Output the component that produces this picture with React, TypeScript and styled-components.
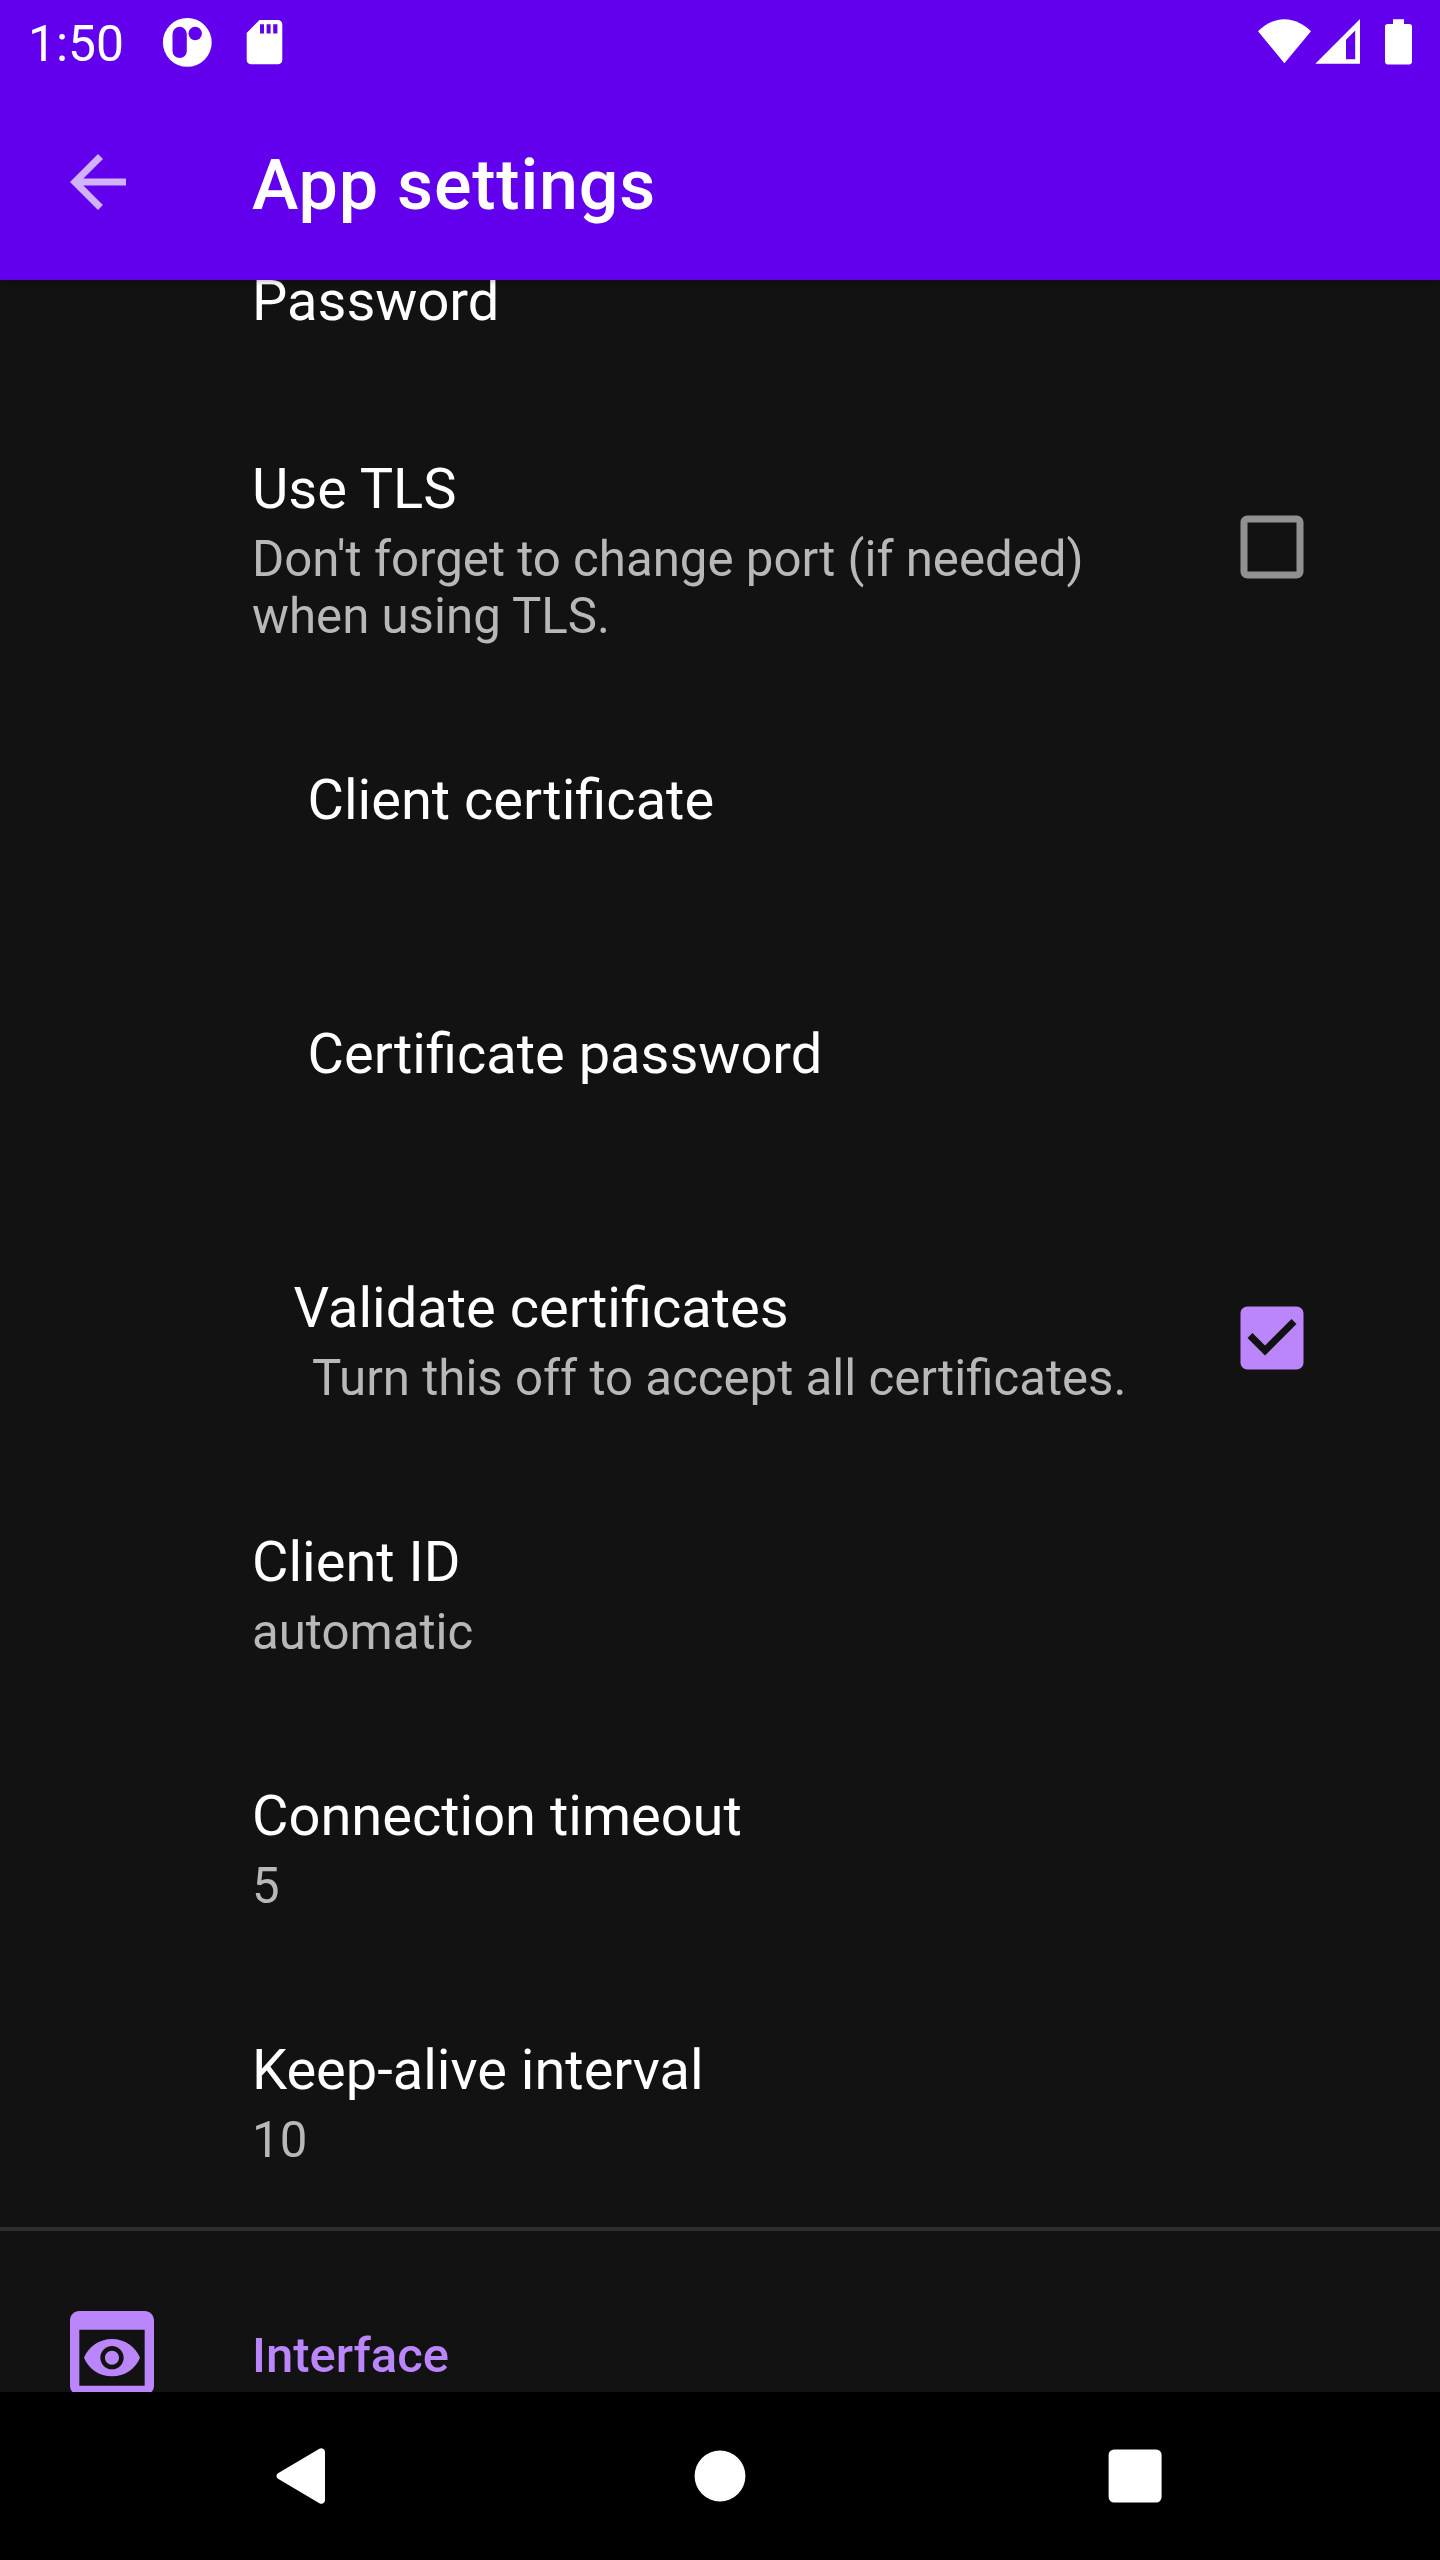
import React from "react";
import styled, { createGlobalStyle } from "styled-components";

const GlobalStyle = createGlobalStyle`
  * { box-sizing: border-box; }
  body { margin: 0; background: #121212; }
`;

const Screen = styled.div`
  display: flex;
  flex-direction: column;
  width: 1440px;
  height: 2560px;
  overflow: hidden;
  background: #121212;
  color: #fff;
  font-family: Roboto, "Liberation Sans", sans-serif;
`;

const Header = styled.header`
  position: relative;
  z-index: 1;
  flex: none;
  background: #6200ee;
  box-shadow: 0 1px 6px rgba(0, 0, 0, 0.3);
`;

const StatusBar = styled.div`
  display: flex;
  height: 84px;
  padding: 0 24px 0 28px;
  align-items: center;
  justify-content: space-between;
`;

const StatusGroup = styled.div`
  display: flex;
  align-items: center;
  height: 84px;
`;

const Clock = styled.span`
  width: 132px;
  padding-top: 4px;
  font-size: 49.8px;
  line-height: 58px;
`;

const Toolbar = styled.div`
  display: flex;
  align-items: center;
  height: 196px;
  padding-left: 56px;
`;

const BackButton = styled.button`
  display: flex;
  width: 196px;
  padding: 0;
  border: 0;
  background: none;
  color: rgba(255, 255, 255, 0.7);
`;

const PageTitle = styled.h1`
  margin: 0;
  padding-top: 5px;
  font-size: 70px;
  font-weight: 500;
  line-height: 82px;
  letter-spacing: 0.8px;
`;

const Content = styled.main`
  flex: 1;
  min-height: 0;
  overflow: hidden;
`;

const List = styled.div`
  margin-top: -76px;
`;

const Row = styled.div`
  display: flex;
  align-items: center;
  padding: 0 126px 0 252px;
`;

const RowText = styled.div`
  flex: 1;
  padding: 64px 0 58px;
`;

const RowTitle = styled.div<{ $indent?: number }>`
  padding-left: ${(p) => p.$indent ?? 0}px;
  font-size: 56px;
  line-height: 66px;
  white-space: nowrap;
`;

const Summary = styled.div<{ $indent?: number }>`
  min-height: 57px;
  margin-top: 9px;
  padding-left: ${(p) => p.$indent ?? 0}px;
  color: #b8b8b8;
  font-size: 49.2px;
  line-height: 57px;
  white-space: pre-line;
`;

const CheckSlot = styled.div<{ $checked: boolean }>`
  display: flex;
  flex: none;
  width: 84px;
  margin-bottom: 1px;
  color: ${(p) => (p.$checked ? "#bb86fc" : "#919191")};
`;

const Section = styled.div`
  display: flex;
  align-items: flex-start;
  padding: 66px 56px 0;
  border-top: 4px solid #2f2f2f;
  color: #bb86fc;
`;

const SectionIcon = styled.div`
  display: flex;
  width: 196px;
`;

const SectionTitle = styled.h2`
  margin: 0;
  padding-top: 30px;
  font-size: 49px;
  font-weight: 500;
  line-height: 57px;
`;

const NavBar = styled.nav`
  display: flex;
  flex: none;
  align-items: center;
  justify-content: center;
  gap: 331px;
  height: 168px;
  background: #000;
`;

const Icon = ({ size, d }: { size: number; d: string }) => (
  <svg width={size} height={size} viewBox="0 0 24 24" fill="currentColor">
    <path d={d} />
  </svg>
);

const ARROW = "M20 11H7.83l5.59-5.59L12 4l-8 8 8 8 1.41-1.41L7.83 13H20v-2z";
const BOX = "M19 5v14H5V5h14m0-2H5c-1.1 0-2 .9-2 2v14c0 1.1.9 2 2 2h14c1.1 0 2-.9 2-2V5c0-1.1-.9-2-2-2z";
const BOX_CHECKED =
  "M19 3H5c-1.11 0-2 .9-2 2v14c0 1.1.89 2 2 2h14c1.11 0 2-.9 2-2V5c0-1.1-.89-2-2-2zm-9 14l-5-5 1.41-1.41L10 14.17l7.59-7.59L19 8l-9 9z";
const PREVIEW =
  "M19 3H5c-1.11 0-2 .9-2 2v14c0 1.1.89 2 2 2h14c1.1 0 2-.9 2-2V5c0-1.1-.9-2-2-2zm0 16H5V7h14v12zm-5.5-6c0 .83-.67 1.5-1.5 1.5s-1.5-.67-1.5-1.5.67-1.5 1.5-1.5 1.5.67 1.5 1.5zM12 9c-2.73 0-5.06 1.66-6 4 .94 2.34 3.27 4 6 4s5.06-1.66 6-4c-.94-2.34-3.27-4-6-4zm0 6.5c-1.38 0-2.5-1.12-2.5-2.5s1.12-2.5 2.5-2.5 2.5 1.12 2.5 2.5-1.12 2.5-2.5 2.5z";

const NotificationIcons = () => (
  <svg width="130" height="84" viewBox="160 0 130 84" fill="#fff">
    <circle cx="187.3" cy="42.4" r="24.4" />
    <rect x="172.5" y="26.8" width="14.3" height="31.2" rx="7.1" fill="#6200ee" />
    <circle cx="195.2" cy="33.5" r="6.7" fill="#6200ee" />
    <path
      fillRule="evenodd"
      d="M259.5 20H278a4.3 4.3 0 0 1 4.3 4.3V60a4.3 4.3 0 0 1-4.3 4.3H251a4.3 4.3 0 0 1-4.3-4.3V33ZM260 24.3v9.3h4v-9.3ZM266.6 24.3v9.3h4v-9.3ZM273.2 24.3v9.3h4.2v-9.3Z"
    />
  </svg>
);

const SystemIcons = () => (
  <svg width="160" height="84" viewBox="1256 0 160 84" fill="#fff">
    <path d="M1284.4 63.3 1258 31.2C1265 24.5 1274 19.2 1284.4 19.2S1304 24.5 1311 31.2Z" />
    <path fillRule="evenodd" d="M1315.3 63.7 1360 19v44.7ZM1346 39.7V59.3h9.2V30.5Z" />
    <path d="M1393 19.3h11V24h5.2a2.8 2.8 0 0 1 2.8 2.8V61.6a2.8 2.8 0 0 1-2.8 2.8h-21.4a2.8 2.8 0 0 1-2.8-2.8V26.8a2.8 2.8 0 0 1 2.8-2.8h5.2Z" />
  </svg>
);

type Preference = {
  title: string;
  summary?: string;
  titleIndent?: number;
  summaryIndent?: number;
  checked?: boolean;
};

const preferences: Preference[] = [
  { title: "Password" },
  { title: "Use TLS", summary: "Don't forget to change port (if needed)\nwhen using TLS.", checked: false },
  { title: "Client certificate", titleIndent: 55.5, summary: "" },
  { title: "Certificate password", titleIndent: 55.5, summary: "" },
  {
    title: "Validate certificates",
    titleIndent: 41.6,
    summary: "Turn this off to accept all certificates.",
    summaryIndent: 60,
    checked: true,
  },
  { title: "Client ID", summary: "automatic" },
  { title: "Connection timeout", summary: "5" },
  { title: "Keep-alive interval", summary: "10" },
];

export default function App() {
  return (
    <Screen>
      <GlobalStyle />
      <Header>
        <StatusBar>
          <StatusGroup>
            <Clock>1:50</Clock>
            <NotificationIcons />
          </StatusGroup>
          <SystemIcons />
        </StatusBar>
        <Toolbar>
          <BackButton aria-label="Back">
            <Icon size={84} d={ARROW} />
          </BackButton>
          <PageTitle>App settings</PageTitle>
        </Toolbar>
      </Header>
      <Content>
        <List>
          {preferences.map((p) => (
            <Row key={p.title}>
              <RowText>
                <RowTitle $indent={p.titleIndent}>{p.title}</RowTitle>
                {p.summary !== undefined && <Summary $indent={p.summaryIndent}>{p.summary}</Summary>}
              </RowText>
              {p.checked !== undefined && (
                <CheckSlot $checked={p.checked}>
                  <Icon size={84} d={p.checked ? BOX_CHECKED : BOX} />
                </CheckSlot>
              )}
            </Row>
          ))}
          <Section>
            <SectionIcon>
              <Icon size={112} d={PREVIEW} />
            </SectionIcon>
            <SectionTitle>Interface</SectionTitle>
          </Section>
        </List>
      </Content>
      <NavBar>
        <svg width="84" height="84" viewBox="0 0 84 84" fill="#fff">
          <path d="M56.4 14.8 15 39.2a3.3 3.3 0 0 0 0 5.6L56.4 69.2A3.7 3.7 0 0 0 62 66V18a3.7 3.7 0 0 0-5.6-3.2Z" />
        </svg>
        <svg width="84" height="84" viewBox="0 0 84 84" fill="#fff">
          <circle cx="42" cy="42" r="25.4" />
        </svg>
        <svg width="84" height="84" viewBox="0 0 84 84" fill="#fff">
          <rect x="15.6" y="15.4" width="53" height="53.2" rx="5.5" />
        </svg>
      </NavBar>
    </Screen>
  );
}
